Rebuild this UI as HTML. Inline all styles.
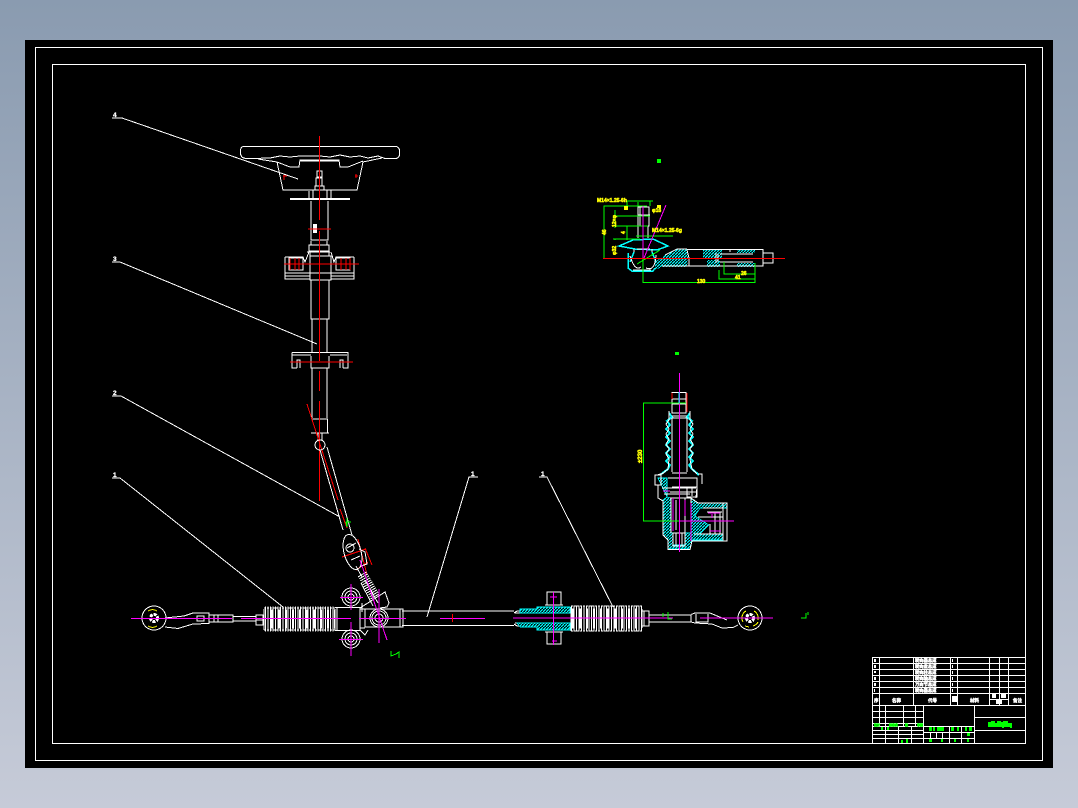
<!DOCTYPE html>
<html lang="zh"><head><meta charset="utf-8"><title>CAD</title>
<style>
html,body{margin:0;padding:0;width:1078px;height:808px;overflow:hidden;background:linear-gradient(#8a9bb0,#c6cbd8)}
svg{position:absolute;left:0;top:0;display:block}
text{font-family:"Liberation Sans","Noto Sans CJK SC",sans-serif;font-weight:700}
</style></head><body>
<svg width="1078" height="808" viewBox="0 0 1078 808" fill="none" shape-rendering="crispEdges">
<defs>
<pattern id="h" width="3" height="3" patternUnits="userSpaceOnUse"><path d="M0 3L3 0" stroke="#0ff" stroke-width="1.2" shape-rendering="auto"/></pattern>
</defs>
<rect x="25" y="40" width="1028" height="728" fill="#000"/>
<g stroke="#fff" stroke-width="1">
<rect x="35.5" y="47.5" width="1007" height="713"/>
<rect x="52.5" y="64.5" width="973" height="679"/>
</g>

<!-- leaders -->
<g stroke="#fff" stroke-width="1">
<path d="M112 118H122L298 179"/>
<path d="M112 262H120L317 344"/>
<path d="M112 396H121L340 517"/>
<path d="M112 478H120L283 607"/>
<path d="M427 617L469 477H478"/>
<path d="M539 477H547L613 607"/>
</g>
<g fill="#fff" font-size="6.500" stroke="#fff" stroke-width=".3">
<text x="113" y="117">4</text><text x="113" y="261">3</text><text x="113" y="395">2</text><text x="113" y="477">1</text><text x="471" y="476">1</text><text x="541" y="476">1</text>
</g>

<!-- steering wheel & column -->
<g stroke="#fff" stroke-width="1">
<path d="M243 146.500H396Q399.500 147 399.500 151V155Q399 158.500 395 158.500H385L378 156L368 158L360 156L350 157L340 155L330 157L320 156L310 156L300 156L290 157L280 156L270 158L252 158.500H246Q240.500 158 240.500 153V150Q241 147 243 146.500Z"/>
<path d="M258 159L277 162L283 190H357L363 162L382 158"/>
<path d="M277 162L290 167H299L300 160H339L340 167H348L363 161"/>
<path d="M300 161H339"/>
<path d="M317 171H322V177H317ZM316 178H322V186H316ZM315 186H324V190H315Z"/>
<path d="M309 191V198M313 190V198M327 190V198M331 190V198"/>
<path d="M311 201V240H328V201M311 240H328M309 245H329V251H309ZM311 241V245M327 241V245"/>
<path d="M307 252H330M310 252V256M329 252V256M310 256H331V280H310ZM310 273H331"/>
<path d="M285 257V279H310M354 257V279H331M285 273H310M285 276H310M331 273H354M331 276H354M285 257H303L305 262L309 252M354 257H336L334 262L331 252"/>
<rect x="289" y="258" width="14" height="12"/><rect x="336" y="258" width="14" height="12"/>
<path d="M311 280V319H329V280M311 319H329M312 319V352M327 319V352"/>
<path d="M292 352.500H348V368H343M292 352.500V368H297M292 355H311M330 355H347M297 368V360H300V368M343 368V360H340V368M311 356V368H329V356"/>
<path d="M312 368V418M327 368V418"/>
<path d="M312.500 419H327.500V433H312M311 433H329"/>
<path d="M318 433V440M322 433V440"/>
</g>
<path d="M290 199H350" stroke="#fff" stroke-width="2"/>
<path d="M313 224H317V233H313Z" fill="#fff"/>
<g stroke="#f00" stroke-width="1">
<path d="M319.500 136V220M319.500 231V290M319.500 261V361M319.500 371V391"/>
<path d="M308 229H331M284 264H359M290 362H353"/>
<path d="M290 258V270M295 258V270M299 258V270M341 258V270M346 258V270M350 258V270"/>
<path d="M284 175V180M283 176H287M355 176H358M356 174V178"/>
<path d="M319.500 401V501M307 404L338 500M340 509L347 528"/>
<path d="M342 557L366 549M358 539L367 575M365 548L372 565M356 570L368 562"/>
</g>

<!-- diagonal shaft -->
<g stroke="#fff" stroke-width="1">
<circle cx="320" cy="445" r="5"/>
<path d="M320 450L343 530M327 447L352 535"/>
<ellipse cx="352.500" cy="552" rx="8.500" ry="18" transform="rotate(-15 352.500 552)"/>
<path d="M347 548L356 543M351 560L360 556"/>
<path d="M359 549L365 552L367 564L361 566M356 566L362 577"/>
<circle cx="350" cy="548" r="4"/>
<path d="M365 580L378 603M361 583L373 606"/>
</g>
<path d="M362 574L376 598" stroke="#fff" stroke-width="10" stroke-dasharray="1 1.300"/>
<g stroke="#fff" stroke-width="1">
<path d="M360 608L385 592L389 603L387 607L380 608M362 612V603"/>
<path d="M335 607.500H360V630.500H335M365 609H403V627H365ZM360 609H365M360 628H365M402 611H514M402 625.500H514"/>
<path d="M360 630L365 635L368 630"/>
<circle cx="351" cy="597" r="9"/><circle cx="351" cy="597" r="6"/><circle cx="351" cy="597" r="3"/>
<circle cx="351" cy="639" r="9"/><circle cx="351" cy="639" r="6"/><circle cx="351" cy="639" r="3"/>
<circle cx="379" cy="618" r="9"/><circle cx="379" cy="618" r="7"/><circle cx="379" cy="618" r="4"/>
<path d="M337 607V631M400 609V627"/>
<circle cx="154" cy="618" r="12"/>
<path d="M165 627L178 628.500L193 624L209 623.500V613H193L184 616L165 618"/>
<path d="M197 616H204V621H197ZM209 615H233V622H209ZM214 615V622M218 615V622M233 616.500H256V621H233ZM256 615H263V625H256ZM256 620H263"/>
</g>
<circle cx="154" cy="618" r="3.500" stroke="#fff" stroke-width="3" stroke-dasharray="3 1"/>
<path d="M157 611A8 8 0 0 0 148 611M148 626A8 8 0 0 0 157 626" stroke="#ff0" stroke-width="1"/>

<!-- left boot -->
<g stroke="#fff">
<path d="M265 619H335" stroke-width="25" stroke-dasharray="1 1.500"/>
<path d="M266 619H335" stroke-width="19" stroke-dasharray="2 5" stroke-dashoffset="2"/>
<path d="M264 609V630M335 609V630M333 609V630" stroke-width="1"/>
<path d="M264 608H335M264 630H335" stroke-width="1" stroke-dasharray="2 1"/>
</g>
<!-- right boot -->
<g stroke="#fff">
<path d="M571 618.500H642" stroke-width="26" stroke-dasharray="1 1.500"/>
<path d="M572 618.500H642" stroke-width="20" stroke-dasharray="2 5"/>
<path d="M571 607V631M642 609V628" stroke-width="1"/>
<path d="M571 606H642M571 631H642" stroke-width="1" stroke-dasharray="2 1"/>
<path d="M514 613L517 611H520M514 624L517 626H520M515 613H570M515 623H570M547 592H561V605H547ZM547 632H561V644H547ZM545 605H563M545 632H563M642 611H649V626H642ZM644 611V626M649 615H691V622H649M691 614.500L695 613H710L722 618L727 620M691 622L695 623L712 624L722 628L733 627.500L738 625" stroke-width="1" fill="none"/>
<path d="M696 614V622H708V614" stroke-width="1" fill="none"/>
<circle cx="750" cy="618" r="12" stroke-width="1" fill="none"/>
<circle cx="750" cy="618" r="3.500" stroke-width="3" stroke-dasharray="3 1"/>
</g>
<path d="M754 611A8 8 0 0 1 758 620M753 626A8 8 0 0 0 758 622M746 611A8 8 0 0 0 743 622M745 626L749 627" stroke="#ff0" stroke-width="1"/>
<path d="M520 609H537L537 607H570V613H520ZM517 623H570V630H537L537 627H520Z" fill="url(#h)" stroke="#0ff" stroke-width=".6"/>

<!-- magenta axes -->
<g stroke="#f0f" stroke-width="1">
<path d="M131 618.500H232M241 618.500H351M359 618.500H406"/>
<path d="M351 584V610M340 597.500H363M351 622V656M339 639.500H363M379 589V643M360 560L387 640"/>
<path d="M440 618.500H485M513 618H663M660 618H673M700 618H773M553.500 592V645"/>
<path d="M550 597H557M552 641H557"/>
</g>
<path d="M452.500 614V622" stroke="#f00" stroke-width="1"/>

<!-- green marks -->
<g stroke="#0f0" stroke-width="1">
<path d="M347 518V527L346 522H351M391 651V656L396 654L399 652V658"/>
<path d="M663 613V617M668 612V619H672M806 613V618H801M808 612V615"/>
</g>
<path d="M657 159H661V163H657Z" fill="#0f0"/>
<path d="M675 352H679V355H675Z" fill="#0f0"/>

<!-- top right detail -->
<path d="M655 270V262L665 255L677 249H687L688 255L687 267H662Z" fill="url(#h)"/>
<path d="M703 250H722V258H703ZM707 260H720V267H707ZM737 249H755V253H737ZM737 263H755V267H737Z" fill="url(#h)"/>
<g stroke="#0ff" stroke-width="1.500">
<path d="M619 246L633 240L653 239L668 246L657 250L635 249Z"/>
<path d="M628 253V268L632 271H653L655 268M634 252L630 262M652 252L656 262"/>
</g>
<g stroke="#fff" stroke-width="1">
<path d="M638 207H649V226H638ZM640 207V226M648 226V238M638 226V238M638 215H650"/>
<path d="M637 249H650M634 249V252M652 249V252M633 270H651"/>
<path d="M630 256Q635 272 641 267M656 255Q655 272 646 268"/>
<path d="M687 249.500H763V266H662M687 250L689 258V266M763 253H773V263H763ZM720 254H753M720 262H753M716 253V263M718 254V262M730 249V252"/>
<path d="M665 255L677 249H687"/>
</g>
<g stroke="#0f0" stroke-width="1">
<path d="M604 258V206H647M627 201H653M627 201V206M650 201V206M638 202V206M615 216H650M615 226H648M627 233V226M613 239H640M636 236H673M627 228V240M615 239V240M615 210V228"/>
<path d="M643 258V282.500H755V263M719 270V279H755M724 262V274H755"/>
<path d="M637 264L660 250"/>
</g>
<path d="M666 205L644 258M643 206V258" stroke="#f0f" stroke-width="1"/>
<path d="M603 258.500H785" stroke="#f00" stroke-width="1"/>
<g fill="#ff0" font-size="5" stroke="#ff0" stroke-width=".5">
<text x="597" y="202">M14×1.25-6h</text>
<text x="652" y="232">M14×1.25-6g</text>
<text x="652" y="212">φ16</text>
<text x="741" y="275">26</text>
<text x="735" y="279">41</text>
<text x="697" y="283">130</text>
<text transform="translate(616 227) rotate(-90)">12×φ</text>
<text transform="translate(606 235) rotate(-90)">46</text>
<text transform="translate(616 255) rotate(-90)">φ32</text>
<text transform="translate(625 234) rotate(-90)">4</text>
<text transform="translate(642 463) rotate(-90)" font-size="6">±230</text>
</g>
<rect x="657" y="205" width="4" height="3" fill="#ff0"/>
<path d="M624 206H628V210H624Z" fill="#ff0"/>

<!-- lower right detail -->
<path d="M658 478H667V497L663 500V535L668 540V549H690L692 540H723V534H700L709 525L695 516L700 508H727V503H698L691 498V533H685V545H673V533H671V498L667 497Z" fill="url(#h)" stroke="#0ff" stroke-width=".7"/>
<path d="M685 478H696V497H685Z" fill="none"/>
<path d="M669 413L672 417L667 421L670 425L666 429L670 433L666 437L670 441L666 445L670 449L666 453L670 457L666 461L670 465L668 469L660 475M690 413L687 417L692 421L689 425L693 429L689 433L693 437L689 441L693 445L689 449L693 453L689 457L693 461L689 465L692 469L699 475" stroke="#0ff" stroke-width="2"/>
<g stroke="#fff" stroke-width="1">
<path d="M672 392.500H686V413H672ZM672 399H686M672 404H686M675 413H684M672 416H687"/>
<path d="M672 418H687V472M672 418V472M672 473H687M672 487H687"/>
<path d="M669 411V420L666 424L669 429L666 434L669 439L666 444L669 449L666 454L669 459L668 469L662 474M690 411V420L693 424L690 429L693 434L690 439L693 444L690 449L693 454L690 459L692 469L697 474"/>
<path d="M655 475H661V485H655ZM698 474H702V484M657 475L664 473M658 485V498L663 501V535L668 540V549.500H690L692 541H723L727 541V503H698L691 498"/>
<path d="M668 478H697V487L696 498M662 488H696M670 492H696M664 494H690"/>
<rect x="687" y="487" width="10" height="10"/>
<path d="M692 488V496M688 492H696"/>
<path d="M670 498H691V512M671 498V533M685 498V533M676 500V530"/>
<path d="M673 533H685V546H673ZM676 533V546M682 533V546"/>
<path d="M703 508H723V534H694M723 503V540M698 517H723M707 512H722M710 524V534M715 512V534M720 512V534"/>
</g>
<g stroke="#f0f" stroke-width="1">
<path d="M679.500 373V552M680 521H734"/>
<path d="M673 498V531M685 500V516M663 491H670M691 503V541M708 513H720M710 531H721M712 514V518"/>
</g>
<g stroke="#f00" stroke-width="1"><path d="M687 393V412M672 393V399"/></g>
<path d="M643 403H686M643.500 403V521M643 521H679" stroke="#0f0" stroke-width="1"/>
<path d="M679 392V403" stroke="#0ff"/>

<!-- title block -->
<g stroke="#fff" stroke-width="1">
<path d="M872.500 657.500H1025M872.500 663.500H1025M872.500 669.500H1025M872.500 675.500H1025M872.500 681.500H1025M872.500 687.500H1025M872.500 693.500H1025M872.500 705.500H1025"/>
<path d="M872.500 657V743M879.500 657V705M913.500 657V705M950.500 657V705M957.500 657V705M989.500 657V705M999.500 657V705M1008.500 657V705"/>
<path d="M989 699.500H1008"/>
<path d="M923.500 705V743M974.500 705V743M974.500 717.500H1025M974.500 730.500H1025"/>
<path d="M872 711.500H923M872 717.500H923M872 723.500H923M872 726.500H923M872 730.500H923M872 734.500H923M872 738.500H923"/>
<path d="M879.500 705V726M885.500 705V726M903.500 705V726M915.500 705V726M885.500 726V743M898.500 726V743M911.500 726V743"/>
<path d="M923 726.500H974M923 732.500H974M923 738.500H974M949.500 726V743M961.500 726V743M930.500 732V738M936.500 732V738M942.500 732V738"/>
</g>
<g fill="#fff" font-size="4.300" stroke="#fff" stroke-width=".45">
<text x="915" y="662">转向器总成</text><text x="915" y="668">转向盘总成</text><text x="915" y="674">转向柱总成</text><text x="915" y="680">转向轴总成</text><text x="915" y="686">万向节总成</text><text x="915" y="692">转向器总成</text>
<text x="892" y="702" font-size="4.500">名称</text><text x="928" y="702" font-size="4.500">代号</text><text x="970" y="702" font-size="4.500">材料</text><text x="1013" y="702" font-size="4.500">备注</text>
<text x="874" y="702" font-size="4.500">序</text>
</g>
<g fill="#fff">
<path d="M874 659H876V662H874ZM874 665H876V668H874ZM874 671H876V673H874ZM874 677H876V680H874ZM874 683H876V686H874ZM874 689H875V692H877V692H874ZM952 659H953V662H952ZM952 665H953V668H952ZM952 671H953V674H952ZM952 677H953V680H952ZM952 683H953V686H952ZM952 689H953V692H952Z"/>
<path d="M952 696H957V702H952ZM992 694H996V698H992ZM1001 694H1006V698H1001ZM996 700H1002V704H996Z"/>
</g>
<path d="M988 722H991V721H995V723H997V721H1001V722H1003V721H1008V723H1012V728H1010V727H1004V728H1002V727H997V727H990V727H988Z" fill="#0f0"/>
<g fill="#0f0" font-size="3" stroke="#0f0" stroke-width=".5">
<text x="874" y="726">设计</text><text x="889" y="726">标准化</text><text x="905" y="726">校</text><text x="917" y="726">审核</text>
</g>
<path d="M881 727H883V730H881ZM887 727H889V730H887ZM901 740H903V743H901ZM906 739H908V743H906ZM929 727H932V731H929ZM933 727H935V731H933ZM937 727H944V731H937ZM951 727H954V731H951ZM957 727H959V731H957ZM965 727H967V731H965ZM969 727H972V731H969ZM967 733H970V736H967ZM929 739H932V742H929ZM941 739H943V742H941ZM954 739H956V742H954ZM967 739H969V742H967Z" fill="#0f0"/>
</svg>
</body></html>
